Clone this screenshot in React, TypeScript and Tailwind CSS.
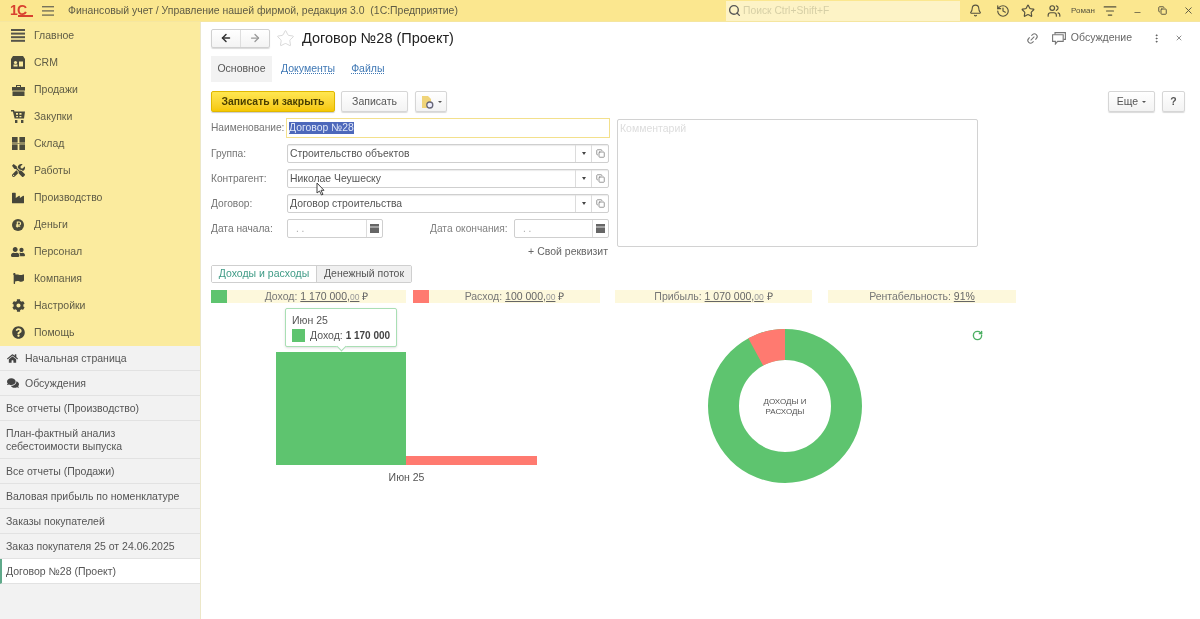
import React from "react";
import { FaTools, FaIndustry, FaUserFriends, FaFlag, FaCog, FaQuestionCircle, FaHome, FaComments, FaRubleSign } from "react-icons/fa";
import { ArrowLeft, ArrowRight, Star, Link2, MoreVertical, X, Bell, History, Users, Minus, Search, RotateCw, Copy, ListFilter } from "lucide-react";

const Lines = () => (
  <svg width="14" height="13" viewBox="0 0 14 13" fill="#55544a">
    <rect x="0" y="0" width="14" height="2" />
    <rect x="0" y="3.6" width="14" height="2" />
    <rect x="0" y="7.2" width="14" height="2" />
    <rect x="0" y="10.8" width="14" height="2" />
  </svg>
);
const Crm = () => (
  <svg width="14" height="13" viewBox="0 0 14 13">
    <path d="M2 0h10l2 3v10H0V3z" fill="#4a4a3c" />
    <circle cx="4.5" cy="6.5" r="1.6" fill="#fbeb9e" />
    <rect x="2.5" y="8.5" width="4" height="2" fill="#fbeb9e" />
    <rect x="8" y="5.5" width="4" height="5" fill="#fbeb9e" />
  </svg>
);
const Sales = () => (
  <svg width="13" height="12" viewBox="0 0 13 12" fill="#4a4a3c">
    <path d="M4 3V1h5v2h-1V2H5v1z" />
    <rect x="0" y="3" width="13" height="3.6" />
    <rect x="0.5" y="7.4" width="12" height="4.6" />
  </svg>
);
const Cart = () => (
  <svg width="14" height="13" viewBox="0 0 14 13" fill="#4a4a3c">
    <path d="M0 0h3l.5 1.5H14l-1 7H3.6L1.9 1.5H0z M5 3v1.8h2V3z M8.4 3v1.8h2.1V3z M5.2 6v1.2h1.8V6z M8.4 6v1.2h2V6z" fillRule="evenodd" />
    <rect x="4" y="10" width="2.4" height="3" />
    <rect x="10" y="10" width="2.4" height="3" />
  </svg>
);
const Store = () => (
  <svg width="13" height="13" viewBox="0 0 13 13" fill="#4a4a3c">
    <rect x="0" y="0" width="5.6" height="5.6" />
    <rect x="7.4" y="0" width="5.6" height="5.6" />
    <rect x="0" y="7.4" width="5.6" height="5.6" />
    <rect x="7.4" y="7.4" width="5.6" height="5.6" />
    <rect x="0" y="6.2" width="13" height="0.6" />
  </svg>
);

const menu: [string, React.ReactNode][] = [
  ["Главное", <Lines />],
  ["CRM", <Crm />],
  ["Продажи", <Sales />],
  ["Закупки", <Cart />],
  ["Склад", <Store />],
  ["Работы", <FaTools size={13} />],
  ["Производство", <FaIndustry size={12} />],
  ["Деньги", <span className="flex h-[12px] w-[12px] items-center justify-center rounded-full bg-[#4a4a3a] text-[#fbeb9e]"><FaRubleSign size={7} /></span>],
  ["Персонал", <FaUserFriends size={14} />],
  ["Компания", <FaFlag size={11} />],
  ["Настройки", <FaCog size={13} />],
  ["Помощь", <FaQuestionCircle size={13} />],
];

function Btn({ className = "", children }: { className?: string; children: React.ReactNode }) {
  return (
    <div className={`flex h-[21px] items-center justify-center rounded-[2px] border border-[#d6d6d6] bg-gradient-to-b from-white to-[#f3f3f3] text-[10.5px] text-[#555] shadow-[0_1px_1px_rgba(0,0,0,0.15)] ${className}`}>
      {children}
    </div>
  );
}

function SelectField({ label, value }: { label: string; value: string }) {
  return (
    <div className="flex h-[19px] items-center">
      <span className="w-[76px] text-[10.2px] text-[#757575]">{label}</span>
      <div className="flex h-[19px] w-[322px] items-center rounded-[2px] border border-[#cfcfcf] bg-white shadow-[inset_0_1px_1px_rgba(0,0,0,0.08)]">
        <span className="flex-1 pl-[2px] text-[10.4px] text-[#555]">{value}</span>
        <span className="flex h-full w-[16px] items-center justify-center border-l border-[#dcdcdc]">
          <span className="h-0 w-0 border-x-[2.5px] border-t-[3px] border-x-transparent border-t-[#444]" />
        </span>
        <span className="flex h-full w-[17px] items-center justify-center border-l border-[#dcdcdc] text-[#777]">
          <Copy size={9} />
        </span>
      </div>
    </div>
  );
}

function DateField({ className = "" }: { className?: string }) {
  return (
    <div className={`flex h-[19px] items-center rounded-[2px] border border-[#cfcfcf] bg-white ${className}`}>
      <span className="flex-1 pl-[8px] text-[10px] text-[#aaa]">. .</span>
      <span className="flex h-full w-[16px] items-center justify-center border-l border-[#dcdcdc]">
        <svg width="9" height="9" viewBox="0 0 9 9" fill="#666">
          <rect x="0" y="0" width="9" height="2.6" />
          <rect x="0" y="3.4" width="9" height="5.6" />
        </svg>
      </span>
    </div>
  );
}

function Kpi({ w, color, label, value, cents }: { w: string; color?: string; label: string; value: string; cents?: string }) {
  return (
    <div className={`flex h-[13px] items-center ${w}`}>
      {color && <span className="h-[13px] w-[16px] shrink-0" style={{ background: color }} />}
      <div className="flex h-[13px] flex-1 items-center justify-center bg-[#fdf8dc] text-[10.5px] text-[#777]">
        <span>{label}:&nbsp;</span>
        <span className="text-[#666] underline">
          {value}
          {cents && <span className="text-[8.5px] text-[#999]">{cents}</span>}
        </span>
        {cents && <span className="text-[#666]">&nbsp;₽</span>}
      </div>
    </div>
  );
}

function OpenItem({ children, icon, active, tall }: { children: React.ReactNode; icon?: React.ReactNode; active?: boolean; tall?: boolean }) {
  return (
    <div className={`flex items-center border-b border-[#e2e2e2] text-[10.5px] leading-[13px] text-[#555] ${tall ? "h-[38px]" : "h-[25px]"} ${active ? "border-l-2 border-l-[#5fa98a] bg-white pl-[4px]" : "pl-[6px]"}`}>
      {icon && <span className="mr-[6px] flex w-[13px] justify-center text-[#444]">{icon}</span>}
      <span>{children}</span>
    </div>
  );
}

export default function App() {
  return (
    <div className="relative flex h-[619px] w-[1200px] flex-col overflow-hidden bg-white font-['Liberation_Sans',Arial,sans-serif] blur-[0.45px]">
      {/* Top bar */}
      <header className="flex h-[22px] shrink-0 items-center border-b border-[#f5e6a0] bg-[#fbe78f] text-[#55523f]">
        <div className="relative ml-[10px] flex h-[14px] w-[23px] items-start">
          <span className="text-[14px] font-bold leading-[12px] tracking-[-0.8px] text-[#d8412f]">1С</span>
          <span className="absolute bottom-[1px] left-[8px] right-0 h-[2px] bg-[#d8412f]" />
        </div>
        <svg width="12" height="10" viewBox="0 0 12 10" fill="#77725a" className="ml-[9px]">
          <rect x="0" y="0" width="12" height="1.4" />
          <rect x="0" y="4.2" width="12" height="1.4" />
          <rect x="0" y="8.4" width="12" height="1.4" />
        </svg>
        <span className="ml-[14px] w-[658px] whitespace-pre text-[10.45px] text-[#5e5b46]">Финансовый учет / Управление нашей фирмой, редакция 3.0  (1С:Предприятие)</span>
        <div className="flex h-[20px] w-[234px] items-center bg-[#fdf3c6] pl-[2px]">
          <Search size={13} strokeWidth={2.5} className="text-[#555]" />
          <span className="ml-[2px] text-[10.3px] text-[#d6cfa6]">Поиск Ctrl+Shift+F</span>
        </div>
        <div className="ml-[8px] flex items-center text-[#55523f]">
          <Bell size={13} className="ml-[1px]" />
          <History size={14} className="ml-[14px]" />
          <Star size={14} className="ml-[11px]" />
          <Users size={14} className="ml-[12px]" />
          <span className="ml-[10px] text-[8px]">Роман</span>
          <ListFilter size={14} className="ml-[8px]" />
          <Minus size={9} className="ml-[16px] mt-[4px]" />
          <Copy size={9} strokeWidth={2.5} className="ml-[16px]" />
          <X size={11} className="ml-[16px]" />
        </div>
      </header>

      <div className="flex min-h-0 flex-1">
        {/* Sidebar */}
        <aside className="flex w-[201px] shrink-0 flex-col border-r border-[#ece7c8] bg-[#f2f2f2]">
          <nav className="h-[324px] bg-[#fbeb9e]">
            {menu.map(([t, ic]) => (
              <div key={t} className="flex h-[27px] items-center">
                <span className="ml-[10px] flex w-[16px] justify-center text-[#46463a]">{ic}</span>
                <span className="ml-[8px] text-[10.5px] text-[#5f5c46]">{t}</span>
              </div>
            ))}
          </nav>
          <OpenItem icon={<FaHome size={11} />}>Начальная страница</OpenItem>
          <OpenItem icon={<FaComments size={12} />}>Обсуждения</OpenItem>
          <OpenItem>Все отчеты (Производство)</OpenItem>
          <OpenItem tall>План-фактный анализ<br />себестоимости выпуска</OpenItem>
          <OpenItem>Все отчеты (Продажи)</OpenItem>
          <OpenItem>Валовая прибыль по номенклатуре</OpenItem>
          <OpenItem>Заказы покупателей</OpenItem>
          <OpenItem>Заказ покупателя 25 от 24.06.2025</OpenItem>
          <OpenItem active>Договор №28 (Проект)</OpenItem>
        </aside>

        {/* Main */}
        <main className="relative min-w-0 flex-1 pl-[10px] pt-[6px]">
          <div className="flex h-[20px] items-center">
            <div className="flex h-[19px] w-[59px] rounded-[2px] border border-[#d0d0d0] bg-gradient-to-b from-white to-[#f3f3f3] shadow-[0_1px_1px_rgba(0,0,0,0.15)]">
              <span className="flex flex-1 items-center justify-center border-r border-[#dedede] text-[#333]"><ArrowLeft size={12} strokeWidth={3} /></span>
              <span className="flex flex-1 items-center justify-center text-[#999]"><ArrowRight size={12} strokeWidth={2.5} /></span>
            </div>
            <Star size={19} strokeWidth={1} className="ml-[6px] text-[#cfcfcf]" />
            <h1 className="ml-[7px] text-[14.5px] leading-[20px] text-[#222]">Договор №28 (Проект)</h1>
            <div className="ml-auto flex items-center text-[#777]">
              <Link2 size={13} className="-rotate-45" />
              <svg width="14" height="13" viewBox="0 0 14 13" fill="none" stroke="#777" strokeWidth="1.1" className="ml-[13px]">
                <path d="M3 2.5V.6h10.4v6.8H11.5" />
                <path d="M.6 2.8h10.6v6.6H5.6l-2.2 2.6V9.4H.6z" />
              </svg>
              <span className="ml-[5px] text-[10.5px] text-[#666]">Обсуждение</span>
              <MoreVertical size={11} className="ml-[19px] text-[#555]" />
              <X size={8} className="ml-[13px] mr-[17px] text-[#555]" />
            </div>
          </div>

          <div className="mt-[8px] flex h-[26px] items-center text-[10.5px]">
            <span className="flex h-[26px] w-[61px] items-center justify-center bg-[#f2f2f2] text-[#555]">Основное</span>
            <span className="ml-[9px] text-[#3f78b5] underline decoration-dotted">Документы</span>
            <span className="ml-[16px] text-[#3f78b5] underline decoration-dotted">Файлы</span>
          </div>

          <div className="mt-[9px] flex h-[21px] items-center">
            <div className="flex h-[21px] w-[124px] items-center justify-center rounded-[2px] border border-[#e0b800] bg-gradient-to-b from-[#ffe74f] to-[#f6c800] text-[10.4px] font-bold text-[#4a3f00] shadow-[0_1px_1px_rgba(0,0,0,0.2)]">
              Записать и закрыть
            </div>
            <Btn className="ml-[6px] w-[67px]">Записать</Btn>
            <Btn className="ml-[7px] w-[32px] gap-[4px]">
              <svg width="13" height="14" viewBox="0 0 13 14">
                <path d="M1 1h6l3 3v9H1z" fill="#f0d479" />
                <circle cx="8.8" cy="10" r="3" fill="#eef" stroke="#667" strokeWidth="1.3" />
              </svg>
              <span className="h-0 w-0 border-x-[2px] border-t-[2.5px] border-x-transparent border-t-[#555]" />
            </Btn>
            <Btn className="ml-auto w-[47px] gap-[4px]">
              Еще
              <span className="h-0 w-0 border-x-[2px] border-t-[2.5px] border-x-transparent border-t-[#555]" />
            </Btn>
            <Btn className="ml-[7px] mr-[15px] w-[23px] font-bold">?</Btn>
          </div>

          {/* Form */}
          <div className="mt-[6px] flex">
            <div className="flex w-[400px] flex-col gap-[6px]">
              <div className="flex h-[20px] items-center">
                <span className="w-[75px] text-[10.2px] text-[#757575]">Наименование:</span>
                <div className="flex h-[20px] w-[324px] items-center border-[1.5px] border-[#f3e08c] bg-white pl-[2px]">
                  <span className="bg-[#4d68bb] text-[10.4px] leading-[12px] text-[#dfe6f7]">Договор №28</span>
                </div>
              </div>
              <SelectField label="Группа:" value="Строительство объектов" />
              <SelectField label="Контрагент:" value="Николае Чеушеску" />
              <SelectField label="Договор:" value="Договор строительства" />
              <div className="flex h-[19px] items-center">
                <span className="w-[76px] text-[10.2px] text-[#757575]">Дата начала:</span>
                <DateField className="w-[96px]" />
                <span className="ml-[47px] w-[84px] text-[10.2px] text-[#808080]">Дата окончания:</span>
                <DateField className="w-[95px]" />
              </div>
              <div className="mt-[1px] pr-[3px] text-right text-[10.5px] leading-[12px] text-[#666]">+ Свой реквизит</div>
            </div>
            <div className="ml-[6px] mt-[1px] h-[128px] w-[361px] rounded-[2px] border border-[#d2d2d2] pl-[2px] pt-[1px] text-[10.5px] text-[#ddd]">Комментарий</div>
          </div>

          {/* Tabs */}
          <div className="mt-[8px] flex h-[18px] w-[201px] rounded-[2px] border border-[#cfcfcf] text-[10.5px]">
            <span className="flex w-[104px] items-center justify-center bg-white text-[#3f9b86]">Доходы и расходы</span>
            <span className="flex flex-1 items-center justify-center border-l border-[#cfcfcf] bg-[#f0f0f0] text-[#555]">Денежный поток</span>
          </div>

          {/* KPIs */}
          <div className="mt-[7px] flex">
            <Kpi w="w-[195px]" color="#5ec46f" label="Доход" value="1 170 000," cents="00" />
            <Kpi w="ml-[7px] w-[187px]" color="#ff7a70" label="Расход" value="100 000," cents="00" />
            <Kpi w="ml-[15px] w-[197px]" label="Прибыль" value="1 070 000," cents="00" />
            <Kpi w="ml-[16px] w-[188px]" label="Рентабельность" value="91%" />
          </div>

          {/* Charts */}
          <div className="flex">
            <div className="w-[497px] pl-[65px] pt-[49px]">
              <svg width="261" height="113" className="block">
                <rect x="0" y="0" width="130" height="113" fill="#5ec46f" />
                <rect x="130" y="104" width="131" height="9" fill="#ff7a70" />
              </svg>
              <div className="mt-[5px] w-[261px] text-center text-[10.5px] text-[#555]">Июн 25</div>
            </div>
            <div className="pt-[26px]">
              <div className="relative h-[154px] w-[154px]">
                <svg width="154" height="154" viewBox="-77 -77 154 154" className="block">
                  <circle r="61.5" fill="none" stroke="#5ec46f" strokeWidth="31" />
                  <path d="M0 -77 A77 77 0 0 0 -36.7 -67.7 L-21.9 -40.4 A46 46 0 0 1 0 -46 Z" fill="#ff7a70" />
                </svg>
                <div className="absolute inset-0 flex items-center justify-center pt-[1px] text-center text-[8px] leading-[10px] text-[#555]">
                  ДОХОДЫ И<br />РАСХОДЫ
                </div>
              </div>
            </div>
            <RotateCw size={11} strokeWidth={3} className="ml-[110px] mt-[27px] text-[#4caf63]" />
          </div>

          {/* Tooltip */}
          <div className="absolute left-[84px] top-[286px] h-[39px] w-[112px] rounded-[2px] border border-[#a9dfb4] bg-white pl-[6px] pt-[5px] text-[10.5px] leading-[13px] text-[#555] shadow-sm">
            <div>Июн 25</div>
            <div className="mt-[2px] flex items-center whitespace-nowrap">
              <span className="h-[13px] w-[13px] bg-[#5ec46f]" />
              <span className="ml-[5px]">Доход:&nbsp;<b className="text-[10px] text-[#444]">1 170 000</b></span>
            </div>
            <span className="absolute -bottom-[4px] left-[52px] h-[7px] w-[7px] rotate-45 border-b border-r border-[#a9dfb4] bg-white" />
          </div>

          {/* Mouse cursor */}
          <svg width="10" height="14" viewBox="0 0 10 14" className="absolute left-[115px] top-[160px]">
            <path d="M1 1v10l2.5-2 2 4 1.5-.7-2-4H8z" fill="#fff" stroke="#444" strokeWidth="1" />
          </svg>
        </main>
      </div>
    </div>
  );
}
